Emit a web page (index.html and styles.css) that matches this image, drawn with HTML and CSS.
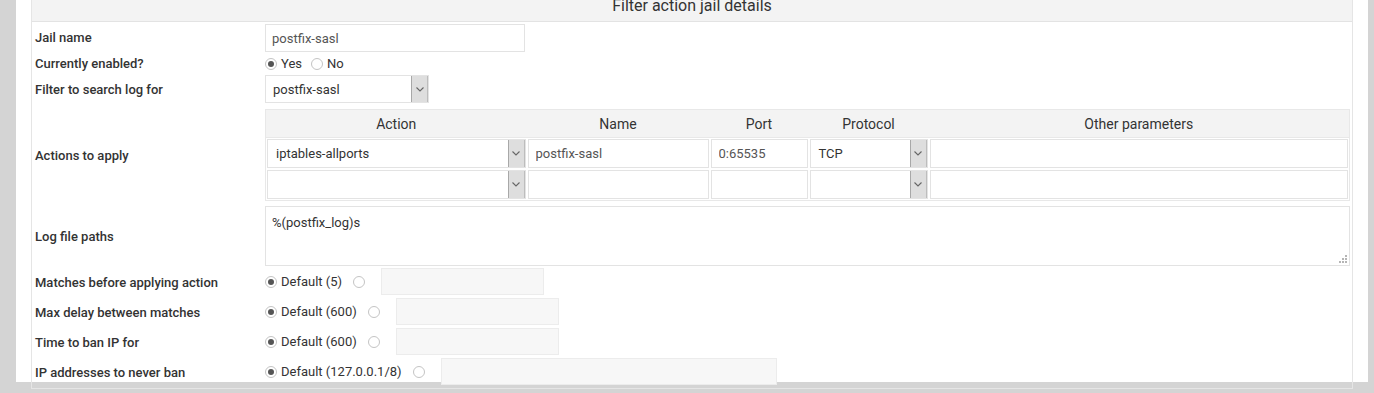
FILE: index.html
```html
<!DOCTYPE html>
<html>
<head>
<meta charset="utf-8">
<link rel="stylesheet" href="styles.css">
</head>
<body>
<div class="page">
  <div class="panel">
    <div class="panel-head">Filter action jail details</div>
    <div class="form">
      <div class="lbl r1">Jail name</div>
      <div class="val r1"><input class="txt w-jail" type="text" value="postfix-sasl"></div>

      <div class="lbl r2">Currently enabled?</div>
      <div class="val r2">
        <span class="radio on"></span><span class="rtext">Yes</span>
        <span class="radio gap"></span><span class="rtext">No</span>
      </div>

      <div class="lbl r3">Filter to search log for</div>
      <div class="val r3">
        <div class="sel w-filter"><span class="sel-v">postfix-sasl</span><span class="sel-b"><svg width="8" height="5" viewBox="0 0 8 5"><path d="M0.5 0.5 L4 4 L7.5 0.5" fill="none" stroke="#666" stroke-width="1.1"/></svg></span></div>
      </div>

      <div class="lbl r4">Actions to apply</div>
      <div class="val r4">
        <table class="acts">
          <colgroup><col class="c1"><col class="c2"><col class="c3"><col class="c4"><col></colgroup>
          <thead>
            <tr><th>Action</th><th>Name</th><th>Port</th><th>Protocol</th><th>Other parameters</th></tr>
          </thead>
          <tbody>
            <tr>
              <td><div class="sel tsel"><span class="sel-v">iptables-allports</span><span class="sel-b"><svg width="8" height="5" viewBox="0 0 8 5"><path d="M0.5 0.5 L4 4 L7.5 0.5" fill="none" stroke="#666" stroke-width="1.1"/></svg></span></div></td>
              <td><input class="txt tin" type="text" value="postfix-sasl"></td>
              <td><input class="txt tin" type="text" value="0:65535"></td>
              <td><div class="sel tsel"><span class="sel-v">TCP</span><span class="sel-b"><svg width="8" height="5" viewBox="0 0 8 5"><path d="M0.5 0.5 L4 4 L7.5 0.5" fill="none" stroke="#666" stroke-width="1.1"/></svg></span></div></td>
              <td><input class="txt tin" type="text" value=""></td>
            </tr>
            <tr>
              <td><div class="sel tsel"><span class="sel-v"></span><span class="sel-b"><svg width="8" height="5" viewBox="0 0 8 5"><path d="M0.5 0.5 L4 4 L7.5 0.5" fill="none" stroke="#666" stroke-width="1.1"/></svg></span></div></td>
              <td><input class="txt tin" type="text" value=""></td>
              <td><input class="txt tin" type="text" value=""></td>
              <td><div class="sel tsel"><span class="sel-v"></span><span class="sel-b"><svg width="8" height="5" viewBox="0 0 8 5"><path d="M0.5 0.5 L4 4 L7.5 0.5" fill="none" stroke="#666" stroke-width="1.1"/></svg></span></div></td>
              <td><input class="txt tin" type="text" value=""></td>
            </tr>
          </tbody>
        </table>
      </div>

      <div class="lbl r5">Log file paths</div>
      <div class="val r5">
        <div class="ta-wrap">
          <textarea class="ta">%(postfix_log)s</textarea>
          <svg class="grip" width="8" height="8" viewBox="0 0 8 8"><g fill="#b5b5b5"><rect x="6" y="0" width="2" height="2"/><rect x="3" y="3" width="2" height="2"/><rect x="6" y="3" width="2" height="2"/><rect x="0" y="6" width="2" height="2"/><rect x="3" y="6" width="2" height="2"/><rect x="6" y="6" width="2" height="2"/></g></svg>
        </div>
      </div>

      <div class="lbl rb">Matches before applying action</div>
      <div class="val rb"><span class="radio on"></span><span class="rtext">Default (5)</span><span class="radio opt"></span><input class="txt dis w-s" type="text" disabled></div>

      <div class="lbl rb">Max delay between matches</div>
      <div class="val rb"><span class="radio on"></span><span class="rtext">Default (600)</span><span class="radio opt"></span><input class="txt dis w-s" type="text" disabled></div>

      <div class="lbl rb">Time to ban IP for</div>
      <div class="val rb"><span class="radio on"></span><span class="rtext">Default (600)</span><span class="radio opt"></span><input class="txt dis w-s" type="text" disabled></div>

      <div class="lbl rb">IP addresses to never ban</div>
      <div class="val rb"><span class="radio on"></span><span class="rtext">Default (127.0.0.1/8)</span><span class="radio opt"></span><input class="txt dis w-l" type="text" disabled></div>
    </div>
  </div>
</div>
</body>
</html>
```

FILE: styles.css
```css
html, body {
  margin: 0;
  padding: 0;
  height: 100%;
  overflow: hidden;
}
body {
  background: #d4d4d4;
  font-family: Roboto, "Liberation Sans", sans-serif;
  font-size: 13px;
  color: #333;
}
.page {
  background: #fff;
  margin: 0 6px 0 16px;
  padding: 0 15px;
  height: 100%;
}
.panel {
  border: 1px solid #e5e5e5;
  border-top: none;
  margin-top: -11px;
}
.panel-head {
  background: #f3f3f3;
  height: 32px;
  line-height: 33px;
  text-align: center;
  font-size: 16px;
  color: #333;
  border-bottom: 1px solid #e3e3e3;
}
.form {
  display: grid;
  grid-template-columns: 230px 1fr;
  padding: 0 2px 0 3px;
}
.lbl {
  display: flex;
  align-items: center;
  font-weight: 500;
  color: #333;
}
.val {
  display: flex;
  align-items: center;
}
.r1 { padding: 2px 0 1px; }
.r1.lbl { padding-top: 1px; }
.r2 { height: 21px; }
.r3 { padding: 1px 0 1px; }
.r4 { padding: 5px 0 5px; }
.r5 { padding: 0 0 2px; }
.rb { height: 30px; box-sizing: border-box; }
.val.rb { padding-bottom: 3px; }
.lbl.rb { padding-bottom: 2px; }

.txt {
  box-sizing: border-box;
  height: 28px;
  border: 1px solid #e3e3e3;
  background: #fff;
  font-family: Roboto, "Liberation Sans", sans-serif;
  font-size: 13px;
  color: #555;
  padding: 0 6px;
  margin: 0;
  outline: none;
}
.w-jail { width: 260px; }
.dis {
  background: #f7f7f7;
  border-color: #ececec;
  height: 27px;
  margin-left: 16px;
}
.w-s { width: 163px; }
.w-l { width: 336px; }

.radio {
  box-sizing: border-box;
  width: 12px;
  height: 12px;
  border: 1px solid #c4c4c4;
  border-radius: 50%;
  background: #fff;
  display: inline-flex;
  align-items: center;
  justify-content: center;
  flex: none;
}
.radio.on::after {
  content: "";
  width: 6px;
  height: 6px;
  border-radius: 50%;
  background: #555;
}
.radio.gap { margin-left: 9px; }
.radio.opt { margin-left: 11px; }
.rtext {
  margin-left: 4px;
  color: #333;
  font-size: 13px;
}

.sel {
  box-sizing: border-box;
  display: flex;
  height: 28px;
  border: 1px solid #e3e3e3;
  background: #fff;
  color: #333;
}
.w-filter { width: 164px; }
.sel-v {
  flex: 1;
  display: flex;
  align-items: center;
  padding-left: 7px;
  font-size: 13px;
}
.sel-b {
  width: 15px;
  background: #dedede;
  border-left: 1px solid #a8a8a8;
  border-right: 1px solid #bdbdbd;
  display: flex;
  align-items: center;
  justify-content: center;
}

.acts {
  width: 100%;
  border-collapse: collapse;
  table-layout: fixed;
  border: 1px solid #e8e8e8;
}
.acts col.c1 { width: 261px; }
.acts col.c2 { width: 183px; }
.acts col.c3 { width: 99px; }
.acts col.c4 { width: 120px; }
.acts th {
  background: #f3f3f3;
  height: 27px;
  padding: 0;
  font-weight: normal;
  font-size: 14px;
  color: #333;
  text-align: center;
  border-bottom: 1px solid #e8e8e8;
}
.acts td {
  padding: 1px;
}
.tin {
  width: 100%;
  height: 29px;
  padding: 0 7px;
}
.tsel {
  width: 100%;
  height: 29px;
}
.tsel .sel-v { padding-left: 8px; }

.ta-wrap {
  position: relative;
  flex: 1;
  display: flex;
}
.ta {
  flex: 1;
  box-sizing: border-box;
  height: 60px;
  border: 1px solid #e3e3e3;
  resize: none;
  font-family: Roboto, "Liberation Sans", sans-serif;
  font-size: 13px;
  color: #333;
  padding: 8px 6px;
  margin: 0;
  outline: none;
  overflow: hidden;
}
.grip {
  position: absolute;
  right: 3px;
  bottom: 3px;
}
```
